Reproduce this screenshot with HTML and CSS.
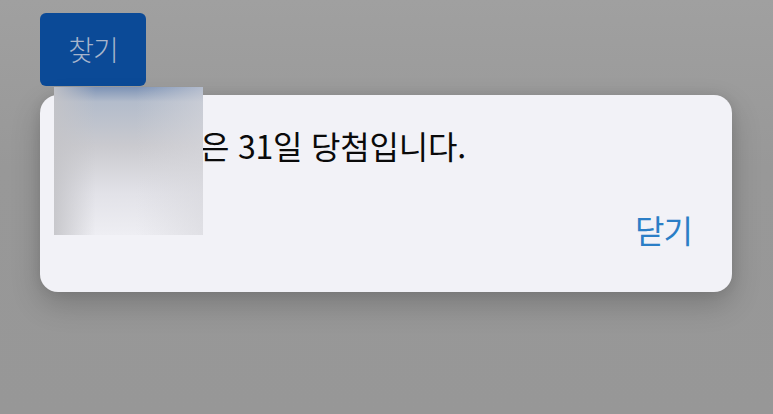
FILE: index.html
```html
<!DOCTYPE html>
<html lang="ko">
<head>
  <meta charset="UTF-8">
  <meta name="viewport" content="width=device-width, initial-scale=1.0">
  <title>당첨 확인</title>
  <link rel="stylesheet" href="styles.css">
</head>
<body>
  <div class="page">
    <button class="find-btn">찾기</button>
    <div class="alert">
      <div class="alert-msg">은 31일 당첨입니다.</div>
      <div class="alert-actions">
        <button class="close-btn">닫기</button>
      </div>
    </div>
    <!-- name is blurred out -->
    <div class="redact"></div>
  </div>
</body>
</html>
```

FILE: styles.css
```css
html, body {
  margin: 0;
  height: 100%;
}
body {
  font-family: "Noto Sans CJK KR", "Noto Sans", sans-serif;
  background: linear-gradient(#a0a0a0, #989898 40%, #979797);
  overflow: hidden;
}
.page {
  position: relative;
  padding: 13px 40px 0;
  display: flex;
  flex-direction: column;
  align-items: flex-start;
}
.find-btn {
  width: 106px;
  height: 73px;
  border: none;
  border-radius: 6px;
  background-color: #0b4a97;
  color: #a7b5cc;
  font-family: inherit;
  font-size: 28px;
  font-weight: 300;
  letter-spacing: -1px;
  padding: 0 0 2px;
}
.alert {
  margin-top: 9px;
  width: 692px;
  height: 197px;
  box-sizing: border-box;
  background-color: #f2f2f7;
  border-radius: 18px;
  box-shadow: 0 12px 30px rgba(0, 0, 0, 0.2), 0 0 12px rgba(0, 0, 0, 0.08);
  padding: 30px 40px 0 160px;
  display: flex;
  flex-direction: column;
}
.alert-msg {
  color: #0a0a0a;
  font-size: 32px;
  line-height: 40px;
  letter-spacing: -0.2px;
}
.alert-actions {
  margin-top: 44px;
  display: flex;
  justify-content: flex-end;
}
.close-btn {
  background: none;
  border: none;
  padding: 0;
  color: #2b7ec6;
  font-family: inherit;
  font-size: 32px;
  line-height: 40px;
  letter-spacing: -1px;
}
.redact {
  position: absolute;
  left: 54px;
  top: 87px;
  width: 149px;
  height: 148px;
  background:
    linear-gradient(90deg, rgba(196, 196, 200, 0.9), rgba(235, 235, 240, 0) 28%),
    linear-gradient(90deg, rgba(242, 242, 247, 0) 55%, rgba(215, 215, 220, 0.6)),
    linear-gradient(180deg, #7d93b6 0%, #b3bccb 10%, #cacacf 40%, #e2e2e8 72%, #eeeef3 100%);
}
```
